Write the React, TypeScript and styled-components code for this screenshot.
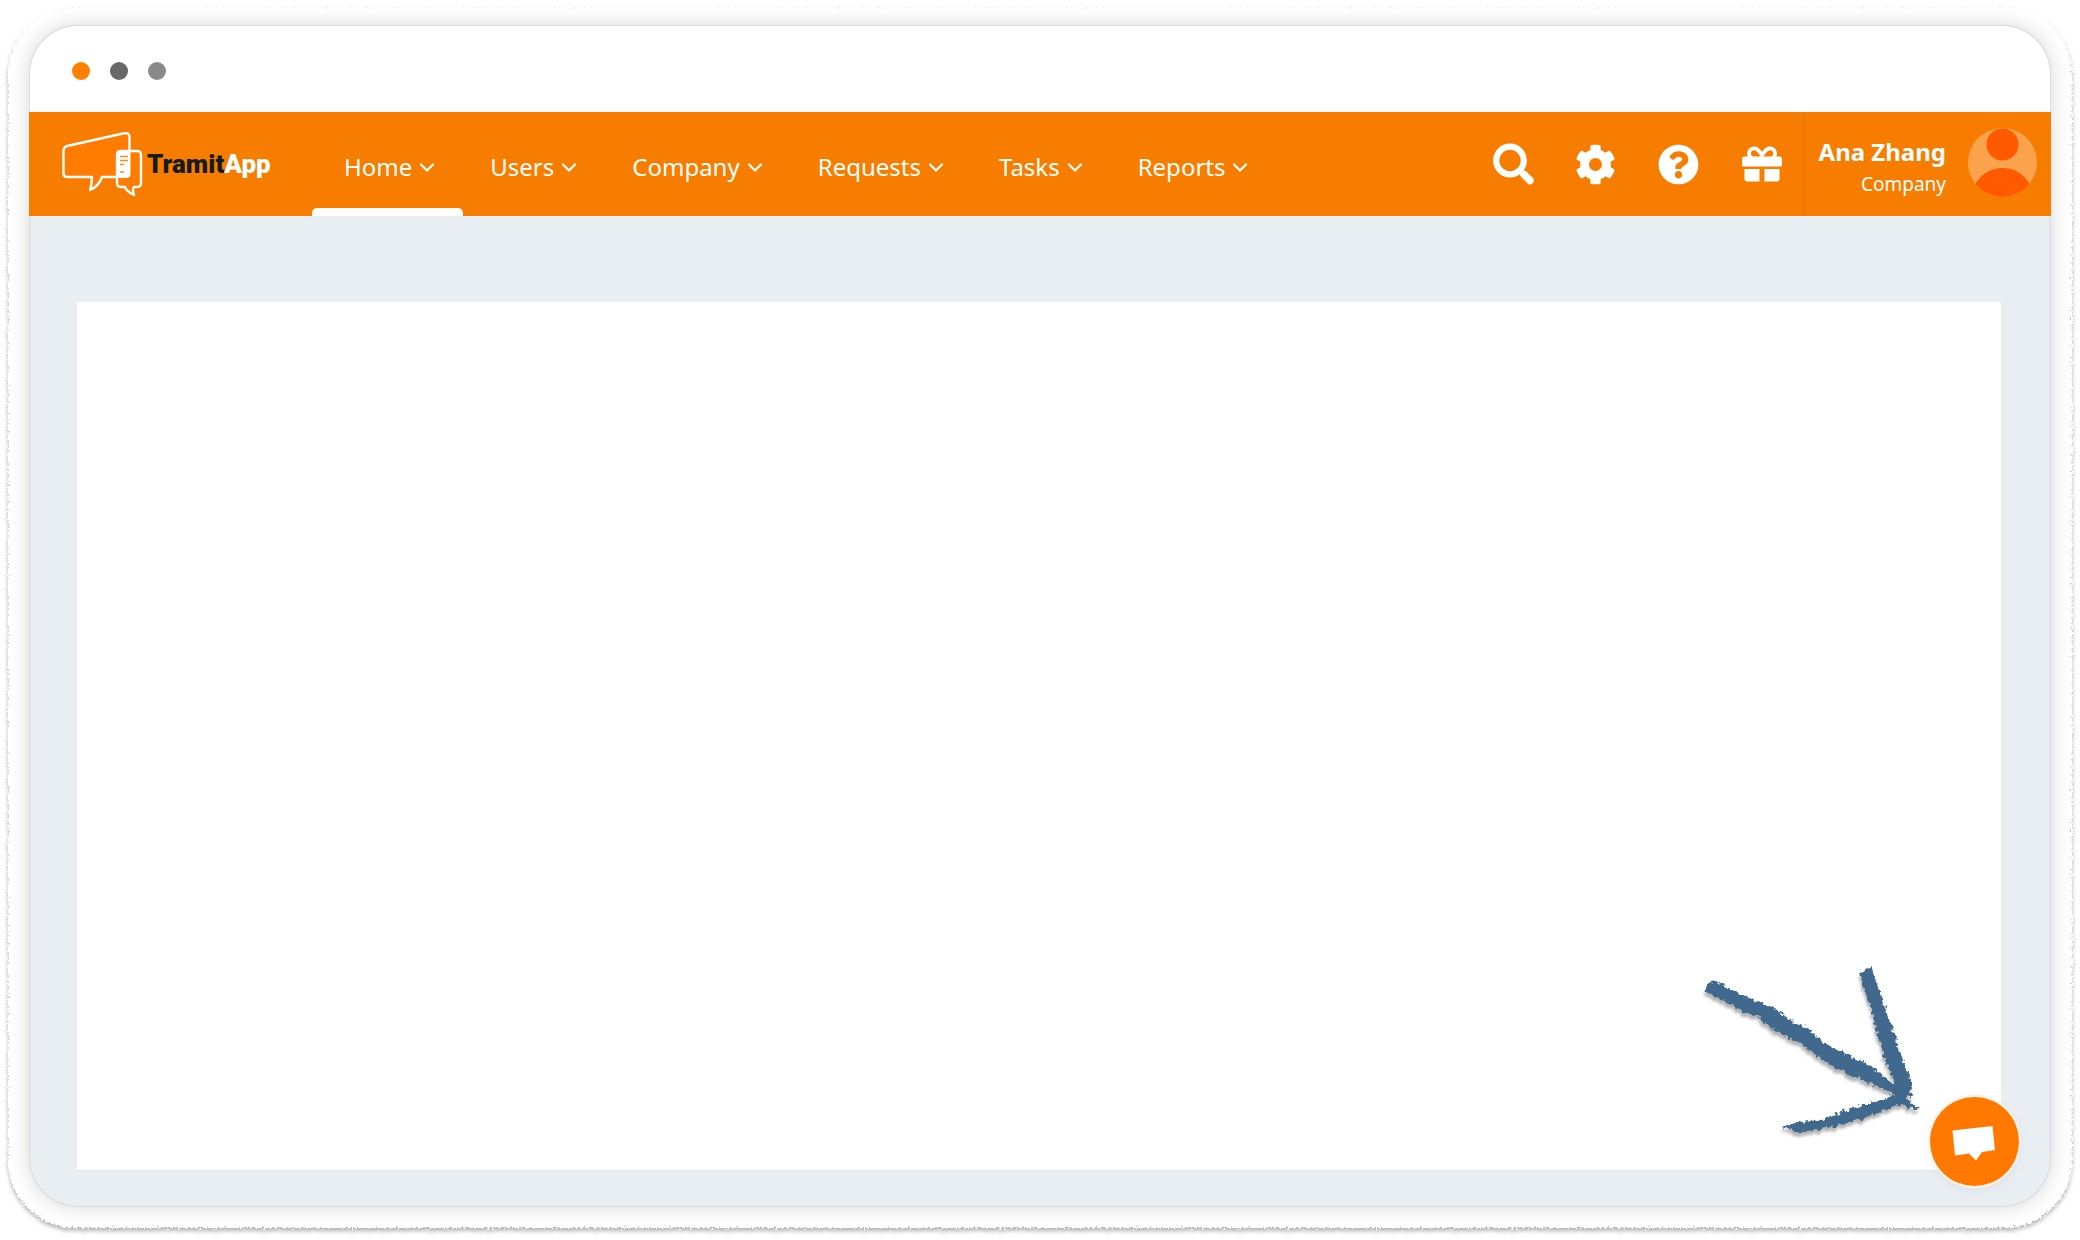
import React from "react";
import styled, { createGlobalStyle } from "styled-components";
import { FaCog, FaGift, FaQuestionCircle } from "react-icons/fa";

const GlobalStyle = createGlobalStyle`
  *, *::before, *::after { box-sizing: border-box; }
  body {
    margin: 0;
    background: #fff;
    font-family: "Noto Sans", "Open Sans", sans-serif;
  }
  button { font: inherit; color: inherit; }
`;

const Page = styled.div`
  min-height: 100vh;
  display: flex;
  padding: 7px 8px 12px;
`;

const Defs = styled.svg`
  position: absolute;
  width: 0;
  height: 0;
`;

const Mat = styled.div`
  position: relative;
  flex: 1;
  display: flex;
  padding: 18px 21px 21px;

  &::before {
    content: "";
    position: absolute;
    inset: 0;
    border-radius: 68px;
    background: #fff;
    filter: url(#paper-edge) drop-shadow(0 3px 2px rgba(0, 0, 0, 0.3));
  }
`;

const Window = styled.div`
  position: relative;
  flex: 1;
  display: flex;
  flex-direction: column;
  border-radius: 49px;
  background: #e9eef2;
  box-shadow: 0 0 0 1px #d9dbdd inset, 0 0 20px rgba(0, 0, 0, 0.16);
`;

const TitleBar = styled.div`
  display: flex;
  align-items: center;
  gap: 20px;
  height: 87px;
  padding: 4px 42px 0;
  border: 1px solid #dcdcdc;
  border-bottom: 0;
  border-radius: 49px 49px 0 0;
  background: #fff;
`;

const Dot = styled.span<{ $color: string }>`
  width: 18px;
  height: 18px;
  border-radius: 50%;
  background: ${(p) => p.$color};
`;

const Header = styled.header`
  display: flex;
  align-items: stretch;
  height: 104px;
  padding: 0 14px 0 32px;
  background: #f77d00;
  color: #fff;
`;

const Brand = styled.a`
  display: flex;
  align-items: center;
  width: 256px;
  flex: none;
  padding-top: 4px;
`;

const Nav = styled.nav`
  display: flex;
  flex: 1;
`;

const NavItem = styled.button<{ $active?: boolean }>`
  position: relative;
  display: flex;
  align-items: center;
  gap: 8px;
  padding: 5px 28px 0 27px;
  border: 0;
  background: none;
  font-size: 24px;
  white-space: nowrap;
  cursor: pointer;

  &::after {
    content: "";
    display: ${(p) => (p.$active ? "block" : "none")};
    position: absolute;
    left: -5px;
    right: 0;
    bottom: 0;
    height: 8px;
    border-radius: 5px 5px 0 0;
    background: #fff;
  }
`;

const Tools = styled.div`
  display: flex;
  align-items: center;
  gap: 41px;
  padding-right: 20px;
`;

const ToolButton = styled.button`
  display: flex;
  width: 42px;
  height: 42px;
  align-items: center;
  justify-content: center;
  padding: 0;
  border: 0;
  background: none;
  cursor: pointer;
`;

const Account = styled.button`
  display: flex;
  align-items: center;
  gap: 22px;
  padding: 0 0 3px 14px;
  border: 0;
  border-left: 2px solid #eb7700;
  background: none;
  text-align: right;
  cursor: pointer;
`;

const AccountText = styled.span`
  display: flex;
  flex-direction: column;
  padding-top: 9px;
`;

const AccountName = styled.strong`
  font-size: 24px;
  line-height: 34px;
`;

const AccountRole = styled.span`
  font-size: 19px;
  line-height: 30px;
`;

const Main = styled.main`
  flex: 1;
  display: flex;
  padding: 86px 50px 37px 48px;
`;

const Panel = styled.section`
  flex: 1;
  background: #fff;
  box-shadow: 0 1px 0 #dfe3e6;
`;

const Arrow = styled.svg`
  position: absolute;
  right: 121px;
  bottom: 57px;
  width: 240px;
  height: 200px;
  overflow: visible;
`;

const ChatButton = styled.button`
  position: absolute;
  right: 32px;
  bottom: 21px;
  width: 89px;
  height: 89px;
  padding: 0;
  border: 0;
  border-radius: 50%;
  background: #ff7800;
  box-shadow: 0 0 0 2px #fff3e8, 0 3px 14px rgba(0, 0, 0, 0.06);
  cursor: pointer;
`;

const Logo = () => (
  <svg width="230" height="70" viewBox="0 0 230 70" aria-hidden="true">
    <g fill="#ff7c00" stroke="#fff" strokeWidth="2.400" strokeLinejoin="round">
      <path d="M6 15 L62 2.5 Q68.500 1 68.500 6 V46 H41 Q38 55 29 59 Q31 53 31 46 H6 Q2.500 46 2.500 42 V20 Q2.500 16 6 15 Z" />
      <path d="M60 20 H76 Q80 20 80 24 V52 Q80 56 76 56 H73 Q71 58 73 64 Q66 61 64 56 H60 Q56 56 56 52 V24 Q56 20 60 20 Z" />
    </g>
    <path
      d="M60 19 H69.500 V43 Q69.500 47 65 47 H59 Q55 47 55 42 V24 Q55 19 60 19 Z"
      fill="#fff"
    />
    <path
      d="M59 25.500 H67 M59 29.500 H67 M59 33.500 H63 M59 41 H63"
      stroke="#ff8a1c"
      strokeWidth="1.500"
    />
    <text
      x="86"
      y="42"
      fontFamily="Roboto, sans-serif"
      fontSize="26"
      fontWeight="900"
      fill="#151b17"
    >
      Tramit<tspan fill="#fff">App</tspan>
    </text>
  </svg>
);

const Chevron = () => (
  <svg width="15" height="10" viewBox="0 0 15 10" aria-hidden="true">
    <path
      d="M1 2.500 L7 8.500 L13 2.500"
      fill="none"
      stroke="#fff"
      strokeWidth="2.200"
      strokeLinecap="round"
      strokeLinejoin="round"
    />
  </svg>
);

const SearchIcon = () => (
  <svg width="42" height="42" viewBox="0 0 42 42" aria-hidden="true">
    <g fill="none" stroke="#fff">
      <circle cx="18" cy="17.500" r="13.800" strokeWidth="6.200" />
      <path d="M28 28 L32 32" strokeWidth="5" />
      <path d="M32 31.500 L38 37.500" strokeWidth="7.500" strokeLinecap="round" />
    </g>
  </svg>
);

const Avatar = () => (
  <svg width="69" height="69" viewBox="0 0 69 69" aria-hidden="true">
    <defs>
      <clipPath id="avatar-clip">
        <circle cx="34.500" cy="34.500" r="34.500" />
      </clipPath>
    </defs>
    <g clipPath="url(#avatar-clip)">
      <rect width="69" height="69" fill="#faa24c" />
      <circle cx="34.500" cy="16.500" r="16" fill="#ff5a00" />
      <circle cx="34.500" cy="71" r="31" fill="#ff5a00" />
    </g>
  </svg>
);

const menu = ["Home", "Users", "Company", "Requests", "Tasks", "Reports"];

export default function App() {
  return (
    <>
      <GlobalStyle />
      <Defs aria-hidden="true">
        <defs>
          <filter id="paper-edge" x="-1%" y="-1%" width="102%" height="102%">
            <feTurbulence type="fractalNoise" baseFrequency="0.5" numOctaves="2" seed="4" result="n" />
            <feDisplacementMap in="SourceGraphic" in2="n" scale="7" xChannelSelector="R" yChannelSelector="G" />
          </filter>
          <filter id="chalk" x="-10%" y="-10%" width="120%" height="120%">
            <feTurbulence type="fractalNoise" baseFrequency="0.25" numOctaves="3" seed="9" result="n" />
            <feDisplacementMap in="SourceGraphic" in2="n" scale="8" xChannelSelector="R" yChannelSelector="G" result="d" />
            <feDropShadow in="d" dx="-1" dy="4" stdDeviation="1.500" floodColor="#000" floodOpacity="0.3" />
          </filter>
        </defs>
      </Defs>
      <Page>
        <Mat>
          <Window>
            <TitleBar>
              <Dot $color="#ff8000" />
              <Dot $color="#686868" />
              <Dot $color="#8a8a8a" />
            </TitleBar>
            <Header>
              <Brand href="#" aria-label="TramitApp">
                <Logo />
              </Brand>
              <Nav>
                {menu.map((label) => (
                  <NavItem key={label} type="button" $active={label === "Home"}>
                    {label}
                    <Chevron />
                  </NavItem>
                ))}
              </Nav>
              <Tools>
                <ToolButton type="button" aria-label="Search">
                  <SearchIcon />
                </ToolButton>
                <ToolButton type="button" aria-label="Settings">
                  <FaCog size={41} />
                </ToolButton>
                <ToolButton type="button" aria-label="Help">
                  <FaQuestionCircle size={41} />
                </ToolButton>
                <ToolButton type="button" aria-label="Gifts">
                  <FaGift size={40} />
                </ToolButton>
              </Tools>
              <Account type="button">
                <AccountText>
                  <AccountName>Ana Zhang</AccountName>
                  <AccountRole>Company</AccountRole>
                </AccountText>
                <Avatar />
              </Account>
            </Header>
            <Main>
              <Panel />
            </Main>
            <Arrow viewBox="0 0 240 200" aria-hidden="true">
              <g fill="#3f698d" filter="url(#chalk)">
                <path d="M22 29 L15 41 L40 54 L58 64 L68 67 L82 79 L97 87 L112 94 L130 109 L150 120 L174 131 L190 138 L207 146 L207 136 L195 127 L178 114 L158 105 L143 98 L130 90 L118 78 L102 71 L88 61 L72 53 L60 49 L46 42 Z" />
                <path d="M170 22 L181 16 L186 32 L193 50 L198 68 L205 84 L209 100 L216 118 L221 130 L221 144 L217 149 L229 159 L224 160 L213 154 L192 161 L172 169 L150 175 L128 180 L108 182 L91 177 L112 172 L130 170 L148 163 L170 156 L190 150 L206 145 L205 132 L197 116 L192 98 L186 80 L183 65 L177 48 Z" />
              </g>
            </Arrow>
            <ChatButton type="button" aria-label="Open chat">
              <svg width="89" height="89" viewBox="0 0 89 89" aria-hidden="true">
                <path d="M22.500 33.500 L62.500 29 L65 53 L52 55 L46 63.500 L39 56.500 L25 58.500 Z" fill="#fff" />
              </svg>
            </ChatButton>
          </Window>
        </Mat>
      </Page>
    </>
  );
}
